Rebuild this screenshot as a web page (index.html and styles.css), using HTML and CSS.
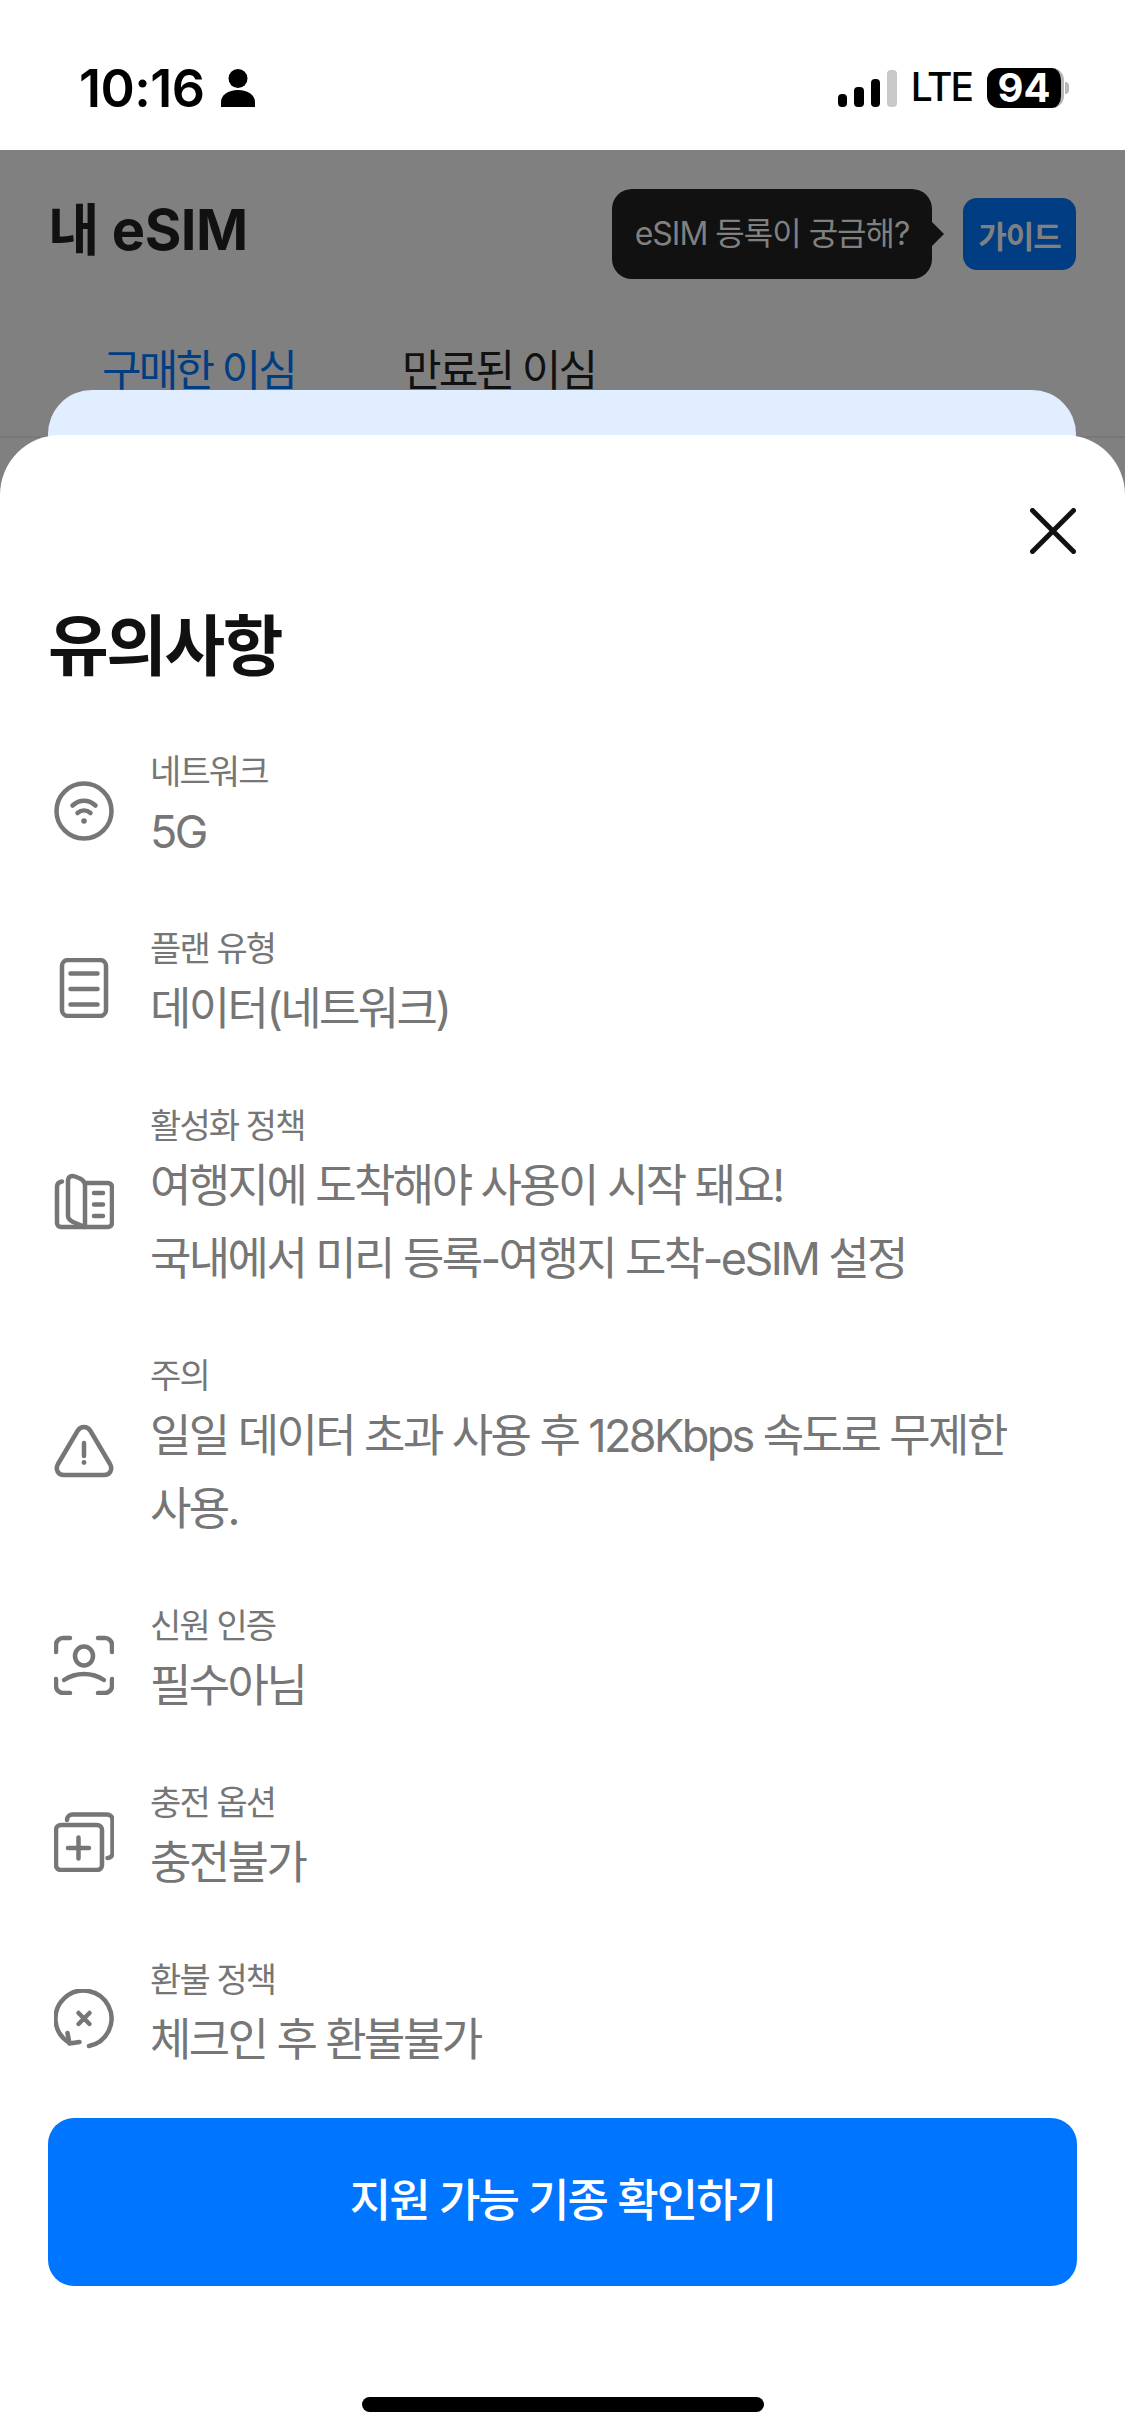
FILE: index.html
```html
<!DOCTYPE html>
<html lang="ko">

<head>
  <meta charset="UTF-8" />
  <meta name="viewport" content="width=device-width, initial-scale=1" />
  <title>내 eSIM</title>
  <link rel="stylesheet" href="styles.css">
</head>

<body>
  <div class="phone">
    <div class="status-bar">
      <div class="status-left">
        <span class="time">10:16</span>
        <svg class="person" viewBox="0 0 34 38" width="34" height="38">
          <circle cx="17" cy="9.5" r="9.5" fill="#000" />
          <path d="M0 38v-5c0-7 7-12 17-12s17 5 17 12v5z" fill="#000" />
        </svg>
      </div>
      <div class="status-right">
        <div class="signal">
          <span class="bar bar1"></span>
          <span class="bar bar2"></span>
          <span class="bar bar3"></span>
          <span class="bar bar4"></span>
        </div>
        <span class="lte">LTE</span>
        <div class="battery">
          <div class="battery-body">94</div>
          <span class="battery-nub"></span>
        </div>
      </div>
    </div>

    <div class="screen">
      <div class="screen-header">
        <h2 class="screen-title">내 eSIM</h2>
        <div class="guide-wrap">
          <div class="tooltip">eSIM 등록이 궁금해?</div>
          <button class="guide-btn">가이드</button>
        </div>
      </div>
      <div class="tabs">
        <span class="tab tab-active">구매한 이심</span>
        <span class="tab">만료된 이심</span>
      </div>
      <div class="plan-card"></div>
    </div>

    <div class="sheet">
      <div class="sheet-top">
        <svg class="close" viewBox="0 0 46 46" width="46" height="46">
          <path d="M2.5 2.5l41 41M43.500 2.500l-41 41" fill="none" stroke="#111" stroke-width="5" stroke-linecap="round" />
        </svg>
      </div>
      <h1 class="sheet-title">유의사항</h1>

      <div class="notes">
        <div class="note">
          <svg class="note-icon" viewBox="0 0 60 60">
            <circle cx="30" cy="30" r="27.500" />
            <path d="M18.500 24.500c7-6.500 16-6.500 23 0M23.500 32c4-3.500 9-3.500 13 0" />
            <circle class="dot" cx="30" cy="40" r="2.800" />
          </svg>
          <div class="note-text">
            <div class="note-label">네트워크</div>
            <div class="note-value">5G</div>
          </div>
        </div>

        <div class="note">
          <svg class="note-icon" viewBox="0 0 60 60">
            <rect x="8" y="2" width="44" height="56" rx="6" />
            <path d="M16.500 15.500h27M16.500 31h27M16.500 46.500h27" />
          </svg>
          <div class="note-text">
            <div class="note-label">플랜 유형</div>
            <div class="note-value">데이터(네트워크)</div>
          </div>
        </div>

        <div class="note">
          <svg class="note-icon" viewBox="0 0 60 60">
            <path d="M31 12h23a4 4 0 0 1 4 4v36a4 4 0 0 1-4 4H7a4 4 0 0 1-4-4V16c0-3 2-5 5-5.500" />
            <path d="M14 10c0-4 3-6 7-4.500l5 2c3 1.500 5 3.500 5 7V56l-12-5c-3-1.500-5-3-5-6z" />
            <path d="M40 22h9M40 33.500h9M40 45h9" />
          </svg>
          <div class="note-text">
            <div class="note-label">활성화 정책</div>
            <div class="note-value">여행지에 도착해야 사용이 시작 돼요!<br>국내에서 미리 등록-여행지 도착-eSIM 설정</div>
          </div>
        </div>

        <div class="note">
          <svg class="note-icon" viewBox="0 0 60 60">
            <path d="M30 6c-3 0-5 1.500-6.500 4L4 43c-3 5.500 0 11 6 11h40c6 0 9-5.500 6-11L36.500 10C35 7.500 33 6 30 6z" />
            <path d="M30 22v13" />
            <circle class="dot" cx="30" cy="41.500" r="2.400" />
          </svg>
          <div class="note-text">
            <div class="note-label">주의</div>
            <div class="note-value">일일 데이터 초과 사용 후 128Kbps 속도로 무제한 사용.</div>
          </div>
        </div>

        <div class="note">
          <svg class="note-icon" viewBox="0 0 60 60">
            <path d="M2 17v-7a7 7 0 0 1 7-7h7M44 3h7a7 7 0 0 1 7 7v7M2 44v7a7 7 0 0 0 7 7h7M44 58h7a7 7 0 0 0 7-7v-7" />
            <ellipse cx="30" cy="21" rx="9" ry="9.500" />
            <path d="M10 45c12-8 28-8 40 0" />
          </svg>
          <div class="note-text">
            <div class="note-label">신원 인증</div>
            <div class="note-value">필수아님</div>
          </div>
        </div>

        <div class="note">
          <svg class="note-icon" viewBox="0 0 60 60">
            <rect x="2" y="13" width="46" height="45" rx="5" />
            <path d="M13 8a5.500 5.500 0 0 1 5.500-5.500H53a5.500 5.500 0 0 1 5.500 5.500v33a5 5 0 0 1-5 5" />
            <path d="M14 36h21M24.500 25.500v21" />
          </svg>
          <div class="note-text">
            <div class="note-label">충전 옵션</div>
            <div class="note-value">충전불가</div>
          </div>
        </div>

        <div class="note">
          <svg class="note-icon" viewBox="0 0 60 60">
            <path d="M35 57a28 28 0 1 0-20-3.500" />
            <path d="M13.500 44l2 10.500 10-1.500" />
            <path d="M24.500 24l11 11M35.500 24l-11 11" />
          </svg>
          <div class="note-text">
            <div class="note-label">환불 정책</div>
            <div class="note-value">체크인 후 환불불가</div>
          </div>
        </div>
      </div>

      <button class="cta">지원 가능 기종 확인하기</button>
      <div class="home-bar"></div>
    </div>
  </div>
</body>

</html>
```

FILE: styles.css
```css
* {
  box-sizing: border-box;
}

body {
  margin: 0;
  background: #fff;
  font-family: Inter, 'Noto Sans CJK KR', sans-serif;
}

.phone {
  position: relative;
  width: 1125px;
  height: 2436px;
  overflow: hidden;
  display: flex;
  flex-direction: column;
}

/* status bar */
.status-bar {
  height: 150px;
  flex-shrink: 0;
  background: #fff;
  padding: 66px 56px 0 79px;
  display: flex;
  justify-content: space-between;
  align-items: flex-start;
  color: #000;
}

.status-left {
  display: flex;
  align-items: center;
  gap: 16px;
  height: 44px;
}

.time {
  font-size: 52px;
  font-weight: 600;
  letter-spacing: -0.5px;
}

.status-right {
  display: flex;
  align-items: flex-start;
}

.signal {
  display: flex;
  align-items: flex-end;
  gap: 7px;
  height: 37px;
  margin-top: 4px;
}

.bar {
  width: 9.500px;
  border-radius: 4px;
  background: #000;
}

.bar1 { height: 13px; }
.bar2 { height: 20px; }
.bar3 { height: 28px; }
.bar4 { height: 37px; background: #c8c8c8; }

.lte {
  margin-left: 14px;
  font-size: 39px;
  line-height: 41px;
  font-weight: 500;
  letter-spacing: -2px;
}

.battery {
  margin-left: 15px;
  display: flex;
  align-items: center;
  margin-top: 2px;
}

.battery-body {
  width: 77px;
  height: 40px;
  border-radius: 12px;
  background: #000;
  color: #fff;
  font-size: 40px;
  font-weight: 700;
  line-height: 40px;
  text-align: center;
  border-right: 3px solid #b8b8b8;
}

.battery-nub {
  width: 4px;
  height: 12px;
  margin-left: 1px;
  border-radius: 0 4px 4px 0;
  background: #b8b8b8;
}

/* dimmed screen behind the sheet */
.screen {
  flex: 1;
  background: #808080;
  padding: 0 49px 0 48px;
}

.screen-header {
  display: flex;
  justify-content: space-between;
  align-items: flex-start;
  padding-top: 39px;
}

.screen-title {
  margin: 0;
  padding-top: 4px;
  font-size: 56px;
  line-height: 74px;
  font-weight: 700;
  color: #111;
  letter-spacing: -0.5px;
}

.guide-wrap {
  display: flex;
  align-items: center;
  gap: 31px;
}

.tooltip {
  position: relative;
  width: 320px;
  height: 90px;
  border-radius: 20px;
  background: #111;
  color: #808080;
  font-size: 32px;
  line-height: 90px;
  text-align: center;
  letter-spacing: -1px;
}

.tooltip::after {
  content: '';
  position: absolute;
  left: 100%;
  top: 33px;
  border-left: 12px solid #111;
  border-top: 12px solid transparent;
  border-bottom: 12px solid transparent;
}

.guide-btn {
  width: 113px;
  height: 72px;
  border: none;
  border-radius: 14px;
  background: #003d82;
  color: #808080;
  font-family: inherit;
  font-size: 31px;
  font-weight: 700;
  letter-spacing: -1px;
  padding: 0;
}

.tabs {
  display: flex;
  gap: 107px;
  margin: 0 -49px 0 -48px;
  padding: 60px 0 0 102px;
  height: 159px;
  border-bottom: 2px solid #777;
}

.tab {
  font-size: 43px;
  line-height: 62px;
  color: #111;
  letter-spacing: -2.800px;
}

.tab-active {
  color: #003d82;
}

.plan-card {
  position: relative;
  margin-top: -48px;
  height: 90px;
  border-radius: 44px 44px 0 0;
  background: #e0eeff;
}

/* bottom sheet */
.sheet {
  position: absolute;
  left: 0;
  right: 0;
  bottom: 0;
  height: 2001px;
  background: #fff;
  border-radius: 60px 60px 0 0;
  padding: 0 48px;
  display: flex;
  flex-direction: column;
}

.sheet-top {
  display: flex;
  justify-content: flex-end;
  padding: 73px 1px 0 0;
  height: 120px;
}

.sheet-title {
  margin: 51px 0 0;
  font-size: 66px;
  line-height: 80px;
  font-weight: 700;
  color: #111;
  letter-spacing: -2.500px;
}

.notes {
  margin-top: 63px;
  display: flex;
  flex-direction: column;
  gap: 58px;
}

.note {
  display: flex;
  align-items: center;
}

.note-icon {
  flex-shrink: 0;
  width: 60px;
  height: 60px;
  margin: 4px 36px 0 6px;
  fill: none;
  stroke: #767676;
  stroke-width: 4.500;
  stroke-linecap: round;
  stroke-linejoin: round;
}

.note-icon .dot {
  fill: #767676;
  stroke: none;
}

.note-text {
  flex: 1;
  color: #767676;
  word-break: keep-all;
}

.note-label {
  font-size: 34px;
  line-height: 46px;
  letter-spacing: -1.900px;
}

.note-value {
  font-size: 45px;
  line-height: 73px;
  letter-spacing: -2.600px;
}

.cta {
  margin-top: 42px;
  height: 168px;
  flex-shrink: 0;
  border: none;
  border-radius: 26px;
  background: #0075ff;
  color: #fff;
  font-family: inherit;
  font-size: 45px;
  font-weight: 500;
  letter-spacing: -1.900px;
  padding: 0 0 10px;
}

.home-bar {
  align-self: center;
  flex-shrink: 0;
  margin-top: 111px;
  width: 402px;
  height: 15px;
  border-radius: 8px;
  background: #000;
}
```
